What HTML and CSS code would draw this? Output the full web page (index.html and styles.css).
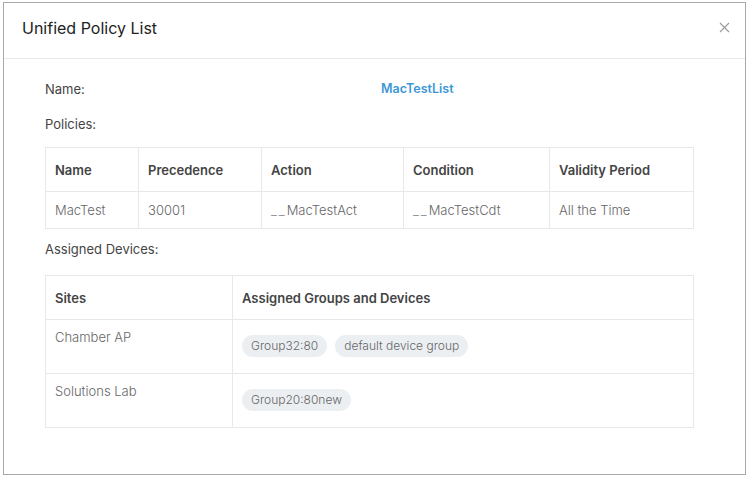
FILE: index.html
```html
<!DOCTYPE html>
<html>
<head>
	<title>Unified Policy List</title>
	<link rel="stylesheet" href="styles.css">
</head>
<body>
	<div class="modal">
		<div class="modal-header">
			<h3>Unified Policy List</h3>
			<span class="close">
				<svg width="11" height="11" viewBox="0 0 11 11"><path d="M1 1L10 10M10 1L1 10" stroke="#9a9a9a" stroke-width="1.1" fill="none"/></svg>
			</span>
		</div>
		<div class="modal-body">
			<div class="info-row">
				<span class="label">Name:</span>
				<span class="value">MacTestList</span>
			</div>
			<div class="section-label">Policies:</div>
			<table class="grid">
				<colgroup>
					<col style="width:93px"><col style="width:123px"><col style="width:142px"><col style="width:146px"><col>
				</colgroup>
				<tr>
					<th>Name</th>
					<th>Precedence</th>
					<th>Action</th>
					<th>Condition</th>
					<th>Validity Period</th>
				</tr>
				<tr>
					<td>MacTest</td>
					<td>30001</td>
					<td><span class="us">__</span>MacTestAct</td>
					<td><span class="us">__</span>MacTestCdt</td>
					<td>All the Time</td>
				</tr>
			</table>
			<div class="section-label devices">Assigned Devices:</div>
			<table class="grid sites">
				<colgroup>
					<col style="width:187px"><col>
				</colgroup>
				<tr>
					<th>Sites</th>
					<th>Assigned Groups and Devices</th>
				</tr>
				<tr>
					<td>Chamber AP</td>
					<td><span class="chip">Group32:80</span><span class="chip">default device group</span></td>
				</tr>
				<tr>
					<td>Solutions Lab</td>
					<td><span class="chip">Group20:80new</span></td>
				</tr>
			</table>
		</div>
	</div>
</body>
</html>
```

FILE: styles.css
```css
body { margin: 0; padding: 2px 0 0 3px; background: #fff; font-family: Inter, "Open Sans", sans-serif; color: #444; }
.modal { width: 743px; height: 473px; box-sizing: border-box; border: 1px solid #a9a9a9; background: #fff; }
.modal-header { height: 56px; box-sizing: border-box; padding: 0 15px 6px 18px; border-bottom: 1px solid #e9e9e9; display: flex; align-items: center; justify-content: space-between; }
.modal-header h3 { margin: 0; font-size: 16px; font-weight: 400; color: #222; }
.close { display: flex; width: 11px; height: 11px; }
.modal-body { padding: 20px 50px 0 41px; font-size: 13px; }
.info-row { display: flex; height: 20px; line-height: 20px; margin-bottom: 15px; }
.info-row .label { width: 336px; }
.info-row .value { color: #3d97d8; font-weight: 600; font-size: 12.5px; }
.section-label { height: 20px; line-height: 20px; margin-bottom: 13px; }
.section-label.devices { margin: 10px 0 16px; }
table.grid { width: 649px; border-collapse: collapse; table-layout: fixed; }
table.grid th, table.grid td { border: 1px solid #e8e8e8; padding: 0 9px; text-align: left; font-size: 13px; }
table.grid th { height: 43px; font-weight: 600; color: #444; }
table.grid td { height: 36px; font-weight: 300; color: #666; }
.us { letter-spacing: 2px; color: #888; }
table.sites td { height: 54px; vertical-align: top; padding-top: 8px; line-height: 18px; box-sizing: border-box; }
.chip { display: inline-block; height: 22px; line-height: 22px; padding: 0 9px; margin: 7px 8px 0 0; border-radius: 11px; background: #eceff2; font-size: 12px; color: #666; }
```
